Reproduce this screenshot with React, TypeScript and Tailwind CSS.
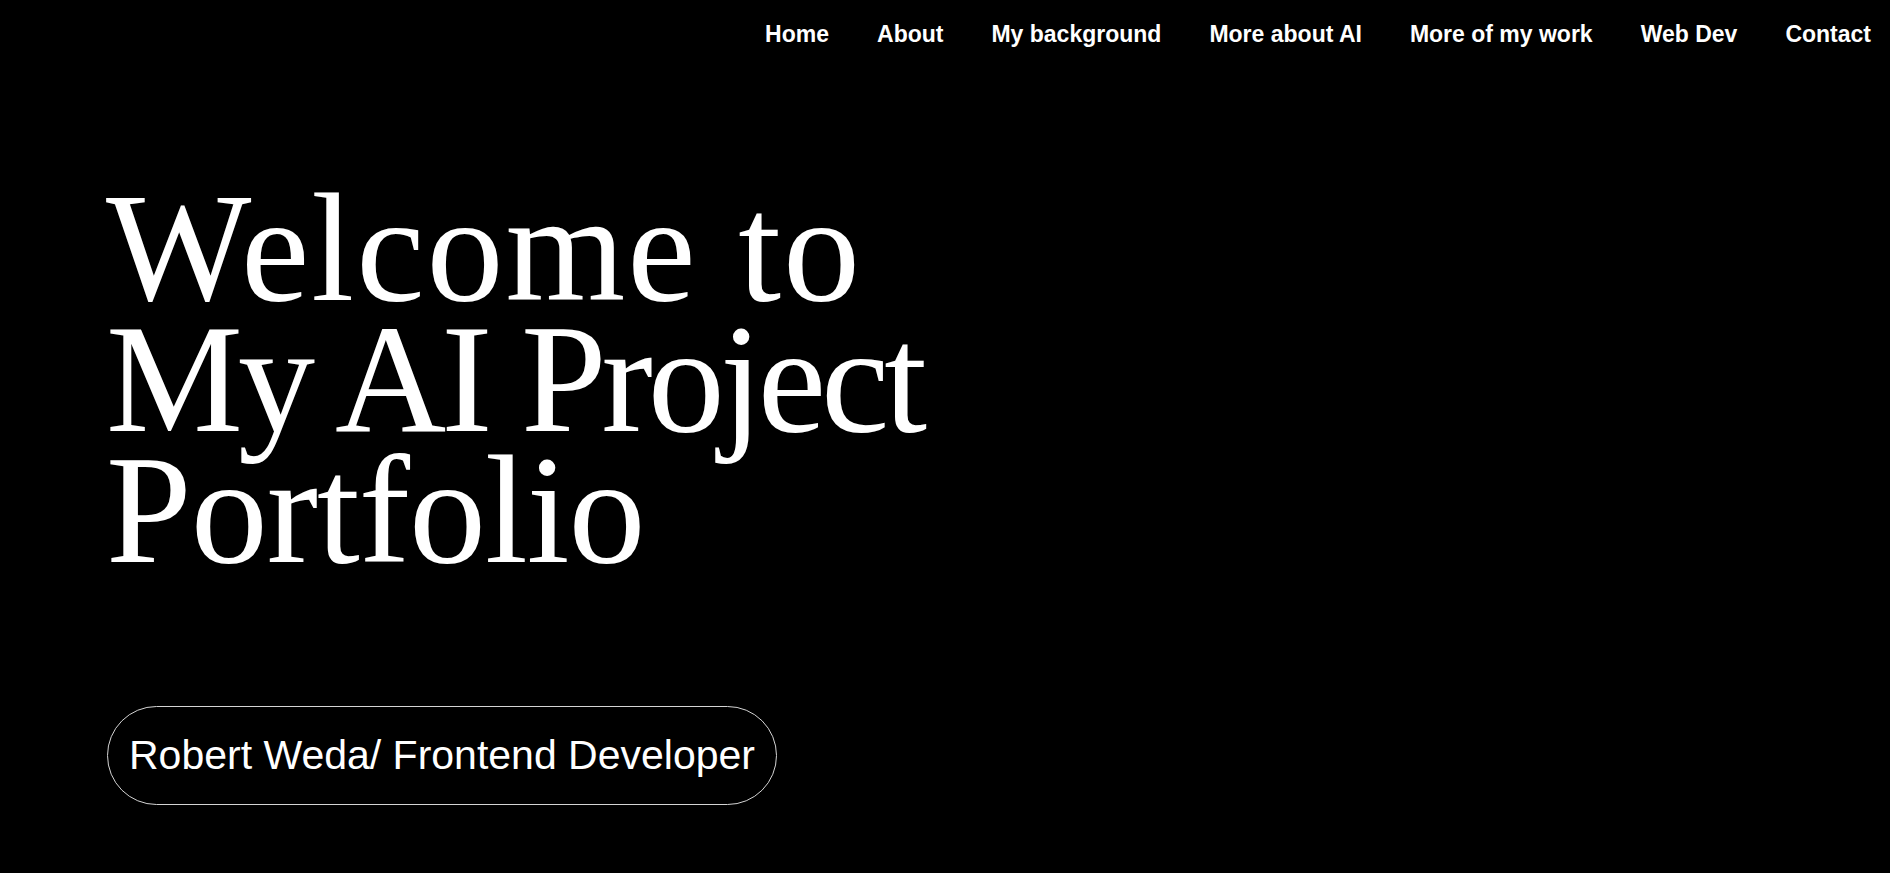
import React from "react";

const links = ["Home", "About", "My background", "More about AI", "More of my work", "Web Dev", "Contact"];

export default function App() {
  return (
    <div className="min-h-[873px] w-full bg-black text-white">
      <nav className="flex justify-end gap-[48px] pt-[20px] pr-[19px]">
        {links.map((l) => (
          <a
            key={l}
            href="#"
            className="text-[23px] leading-[28px] font-bold text-white"
            style={{ fontFamily: '"Liberation Sans", Arial, sans-serif' }}
          >
            {l}
          </a>
        ))}
      </nav>
      <main className="pl-[106px]">
        <h1
          className="mt-[135px] text-[154px] leading-[131px] font-normal"
          style={{ fontFamily: '"Liberation Serif", "Times New Roman", serif' }}
        >
          <span className="block tracking-[2px]">Welcome to</span>
          <span className="block tracking-[-5px]">My AI Project</span>
          <span className="block tracking-[-1px]">Portfolio</span>
        </h1>
        <div className="mt-[130px] ml-[1px]">
          <div
            className="inline-flex h-[99px] items-center rounded-full border border-[#d4d4d4] px-[21px] text-[41px] font-normal"
            style={{ fontFamily: '"Liberation Sans", Arial, sans-serif' }}
          >
            Robert Weda/ Frontend Developer
          </div>
        </div>
      </main>
    </div>
  );
}
